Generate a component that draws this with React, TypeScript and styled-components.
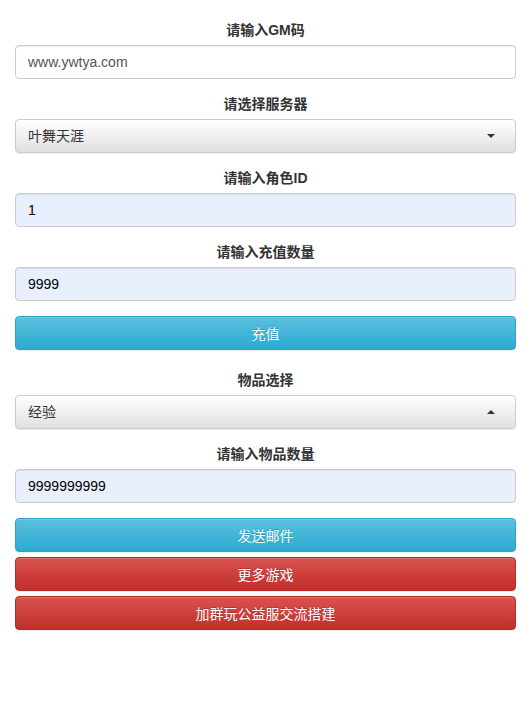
import React from 'react';
import styled, { createGlobalStyle } from 'styled-components';

const GlobalStyle = createGlobalStyle`
  html, body {
    margin: 0;
    padding: 0;
    background: #fff;
  }
  body {
    font-family: "Liberation Sans", Arial, "Noto Sans CJK SC", sans-serif;
    font-size: 14px;
    line-height: 1.42857143;
    color: #333;
  }
  * { box-sizing: border-box; }
`;

const Container = styled.div`
  padding: 20px 15px;
  display: flex;
  flex-direction: column;
`;

const FormGroup = styled.div<{ $gap?: number }>`
  display: flex;
  flex-direction: column;
  margin-bottom: ${p => p.$gap ?? 15}px;
`;

const Label = styled.label`
  display: block;
  text-align: center;
  font-weight: bold;
  margin-bottom: 5px;
  height: 20px;
`;

const Input = styled.input<{ $filled?: boolean }>`
  display: block;
  width: 100%;
  height: 34px;
  padding: 6px 12px;
  font-family: inherit;
  font-size: 14px;
  color: ${p => (p.$filled ? '#000' : '#555')};
  background: ${p => (p.$filled ? '#e8f0fe' : '#fff')};
  border: 1px solid #ccc;
  border-radius: 4px;
  box-shadow: inset 0 1px 1px rgba(0, 0, 0, 0.075);
  outline: none;
`;

const SelectBox = styled.div`
  display: flex;
  align-items: center;
  justify-content: space-between;
  height: 34px;
  padding: 6px 20px 6px 12px;
  color: #333;
  background-image: linear-gradient(to bottom, #fff 0, #e0e0e0 100%);
  border: 1px solid #ccc;
  border-radius: 4px;
  box-shadow: inset 0 1px 0 rgba(255, 255, 255, 0.15), 0 1px 1px rgba(0, 0, 0, 0.075);
`;

const Caret = styled.span<{ $up?: boolean }>`
  width: 0;
  height: 0;
  border-left: 4px solid transparent;
  border-right: 4px solid transparent;
  ${p => (p.$up ? 'border-bottom: 4px solid #333;' : 'border-top: 4px solid #333;')}
`;

const Button = styled.button<{ $variant: 'info' | 'danger' }>`
  display: block;
  width: 100%;
  height: 34px;
  padding: 6px 12px;
  font-family: inherit;
  font-size: 14px;
  color: #fff;
  text-shadow: 0 -1px 0 rgba(0, 0, 0, 0.2);
  border-radius: 4px;
  cursor: pointer;
  box-shadow: inset 0 1px 0 rgba(255, 255, 255, 0.15), 0 1px 1px rgba(0, 0, 0, 0.075);
  border: 1px solid ${p => (p.$variant === 'info' ? '#28a4c9' : '#b92c28')};
  background-image: ${p =>
    p.$variant === 'info'
      ? 'linear-gradient(to bottom, #5bc0de 0, #2aabd2 100%)'
      : 'linear-gradient(to bottom, #d9534f 0, #c12e2a 100%)'};
`;

const ButtonStack = styled.div`
  display: flex;
  flex-direction: column;
  gap: 5px;
`;

const App: React.FC = () => {
  return (
    <>
      <GlobalStyle />
      <Container>
        <FormGroup>
          <Label>请输入GM码</Label>
          <Input defaultValue="www.ywtya.com" />
        </FormGroup>
        <FormGroup>
          <Label>请选择服务器</Label>
          <SelectBox>
            <span>叶舞天涯</span>
            <Caret />
          </SelectBox>
        </FormGroup>
        <FormGroup>
          <Label>请输入角色ID</Label>
          <Input $filled defaultValue="1" />
        </FormGroup>
        <FormGroup>
          <Label>请输入充值数量</Label>
          <Input $filled defaultValue="9999" />
        </FormGroup>
        <FormGroup $gap={20}>
          <Button $variant="info">充值</Button>
        </FormGroup>
        <FormGroup>
          <Label>物品选择</Label>
          <SelectBox>
            <span>经验</span>
            <Caret $up />
          </SelectBox>
        </FormGroup>
        <FormGroup>
          <Label>请输入物品数量</Label>
          <Input $filled defaultValue="9999999999" />
        </FormGroup>
        <ButtonStack>
          <Button $variant="info">发送邮件</Button>
          <Button $variant="danger">更多游戏</Button>
          <Button $variant="danger">加群玩公益服交流搭建</Button>
        </ButtonStack>
      </Container>
    </>
  );
};

export default App;
